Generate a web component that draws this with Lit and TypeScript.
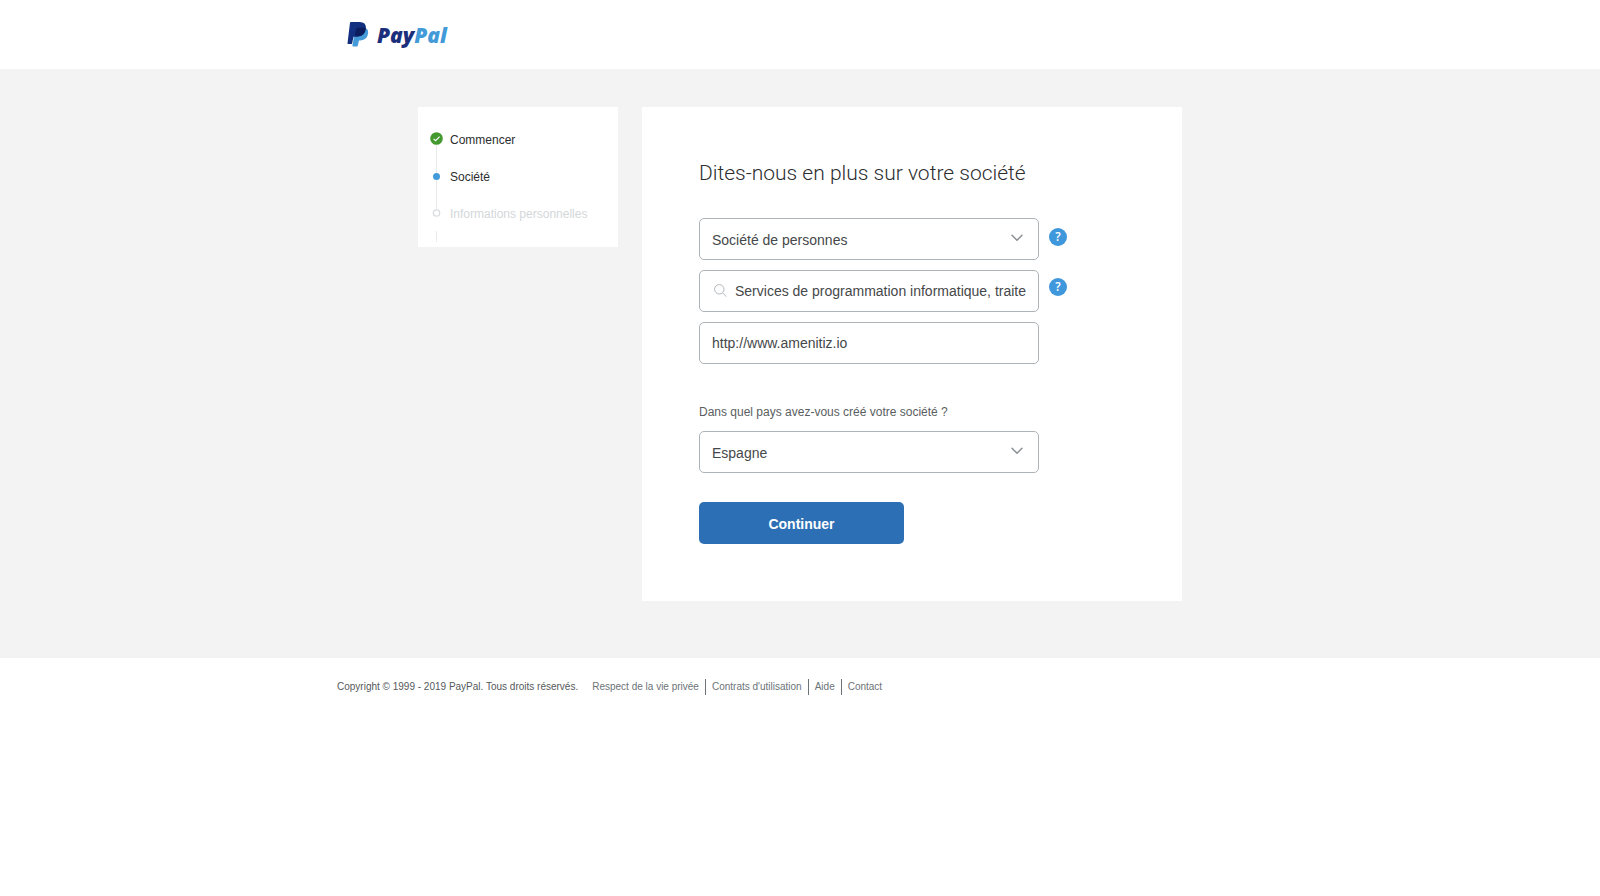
import { LitElement, html, css, svg } from "lit";
import { customElement, property } from "lit/decorators.js";

type StepState = "done" | "current" | "todo";

const chevron = svg`<path d="M1 1.2 L6 6.2 L11 1.2" fill="none" stroke="#8a9094" stroke-width="1.5" stroke-linecap="round" stroke-linejoin="round"/>`;

@customElement("pp-logo")
class PpLogo extends LitElement {
  static styles = css`
    :host { display: block; }
    .logo { display: flex; align-items: center; gap: 8px; text-decoration: none; }
    .mark { display: block; width: 22px; height: 26px; }
    .word { padding-top: 2px; font: italic 800 21px/24px "Open Sans", sans-serif; color: #1b2f7c; }
    .light { color: #429bd8; }
  `;
  render() {
    return html`<a class="logo" href="#" aria-label="PayPal">
      <svg class="mark" viewBox="0 0 22 26" aria-hidden="true">
        <path fill="#459bd8" d="M8.6 6.8 H16.6 Q21.2 7 21.2 11.6 Q20.6 19.4 13.4 19.5 H12 L10.8 24.8 Q10.7 25.6 9.9 25.6 H6.2 Q5.2 25.6 5.4 24.6 Z"/>
        <path fill="#12307f" d="M3.8 1 H12.6 Q19.2 1.2 18.9 6.9 Q18.2 15.2 10.6 15.4 H7.4 Q6.6 15.5 6.4 16.3 L5 23.1 H1.1 Q0.3 23.1 0.5 22.3 L3 1.7 Q3.1 1 3.8 1 Z"/>
        <path fill="#0b1d5c" d="M9.4 6.8 H18.9 Q18.2 15.2 10.6 15.4 H7.7 Z"/>
      </svg>
      <span class="word">Pay<span class="light">Pal</span></span>
    </a>`;
  }
}

@customElement("pp-step")
class PpStep extends LitElement {
  @property() label = "";
  @property() state: StepState = "todo";
  static styles = css`
    :host { display: block; }
    .step { display: grid; grid-template-columns: 13px 1fr; column-gap: 7px; height: 37px; }
    .rail { display: flex; flex-direction: column; align-items: center; }
    .marker { display: block; width: 13px; height: 13px; }
    .line { width: 1px; flex: 1; background: #e9ebed; }
    .gap { margin: 12px 0 1px; }
    .label { font-size: 12px; line-height: 17px; color: #2c2e2f; }
    .muted { color: #d3d7da; }
  `;
  render() {
    const marks = {
      done: svg`<circle cx="6.5" cy="6.5" r="6.3" fill="#43982e"/><path d="M3.6 6.8 L5.6 8.7 L9.6 4.7" fill="none" stroke="#fff" stroke-width="1.1"/>`,
      current: svg`<path d="M6.5 0 V13" stroke="#e9ebed"/><circle cx="6.5" cy="7.4" r="3.5" fill="#429bd8"/>`,
      todo: svg`<path d="M6.5 0 V3" stroke="#e9ebed"/><circle cx="6.5" cy="7" r="3.2" fill="#fff" stroke="#d9dddf" stroke-width="1.3"/>`,
    };
    const todo = this.state === "todo";
    return html`<div class="step">
      <div class="rail">
        <svg class="marker" viewBox="0 0 13 13" aria-hidden="true">${marks[this.state]}</svg>
        <span class="line ${todo ? "gap" : ""}"></span>
      </div>
      <span class="label ${todo ? "muted" : ""}">${this.label}</span>
    </div>`;
  }
}

@customElement("app-root")
class AppRoot extends LitElement {
  static styles = css`
    :host { display: block; min-height: 100vh; background: #fff; color: #2c2e2f; font-family: "Liberation Sans", Arial, sans-serif; }
    * { box-sizing: border-box; }
    .wrap { max-width: 926px; margin: 0 auto; }
    .header { padding: 21px 10px 22px; display: flex; }
    .band { background: #f3f3f3; padding: 38px 0 57px; }
    .columns { max-width: 764px; margin: 0 auto; display: grid; grid-template-columns: 200px 1fr; column-gap: 24px; align-items: start; }
    .steps { background: #fff; padding: 25px 12px 4px; }
    .card { background: #fff; padding: 52px 57px 57px; }
    .title { margin: 0 0 31px; font: 300 21px/28px Roboto, sans-serif; }
    .group { display: flex; gap: 10px; align-items: flex-start; }
    .fields { flex: 0 1 340px; display: grid; gap: 10px; }
    .help { display: grid; gap: 32px; padding-top: 10px; }
    .ask { width: 18px; height: 18px; padding: 0; border: 0; border-radius: 50%; background: #3f97dc; color: #fff; font: 600 12px/18px "Open Sans", sans-serif; }
    .field { position: relative; display: block; }
    .control { display: block; width: 100%; height: 42px; margin: 0; padding: 0 12px; border: 1px solid #adb3b7; border-radius: 5px; background: #fff; color: #45484a; appearance: none; outline: 0; font: 14px/20px "Liberation Sans", Arial, sans-serif; }
    .select { padding-top: 2px; }
    .search { padding-left: 35px; }
    .chevron { position: absolute; right: 16px; top: 16px; width: 12px; height: 8px; pointer-events: none; }
    .glass { position: absolute; left: 15px; top: 14px; width: 13px; height: 13px; pointer-events: none; }
    .country { max-width: 340px; margin-top: 40px; }
    .question { display: block; margin-bottom: 11px; font-size: 12px; line-height: 16px; color: #5a5e61; }
    .submit { display: block; width: 205px; height: 42px; margin-top: 29px; padding: 2px 0 0; border: 0; border-radius: 5px; background: #2d6fb4; color: #fff; font: bold 14px/20px "Liberation Sans", Arial, sans-serif; }
    .footer { display: flex; flex-wrap: wrap; align-items: center; gap: 14px; padding-top: 21px; font-size: 10px; line-height: 16px; color: #55595c; }
    .links { display: flex; align-items: center; }
    .link { color: #6c7378; text-decoration: none; }
    .link + .link { border-left: 1px solid #6c7378; margin-left: 6px; padding-left: 6px; }
  `;

  render() {
    const links = ["Respect de la vie privée", "Contrats d'utilisation", "Aide", "Contact"];
    const arrow = html`<svg class="chevron" viewBox="0 0 12 8" aria-hidden="true">${chevron}</svg>`;
    return html`
      <header class="wrap header"><pp-logo></pp-logo></header>
      <main class="band">
        <div class="columns">
          <nav class="steps" aria-label="Étapes">
            <pp-step state="done" label="Commencer"></pp-step>
            <pp-step state="current" label="Société"></pp-step>
            <pp-step state="todo" label="Informations personnelles"></pp-step>
          </nav>
          <form class="card" @submit=${(e: Event) => e.preventDefault()}>
            <h1 class="title">Dites-nous en plus sur votre société</h1>
            <div class="group">
              <div class="fields">
                <label class="field">
                  <select class="control select" aria-label="Type de société"><option>Société de personnes</option></select>
                  ${arrow}
                </label>
                <label class="field">
                  <input class="control search" type="text" aria-label="Activité" value="Services de programmation informatique, traitement de données" />
                  <svg class="glass" viewBox="0 0 13 13" fill="none" stroke="#b3b8bb" aria-hidden="true">
                    <circle cx="5.3" cy="5.3" r="4.7"/><path d="M8.6 8.8 L12.3 12.6"/>
                  </svg>
                </label>
                <label class="field">
                  <input class="control" type="text" aria-label="Site Web" value="http://www.amenitiz.io" />
                </label>
              </div>
              <div class="help">
                <button class="ask" type="button">?</button>
                <button class="ask" type="button">?</button>
              </div>
            </div>
            <div class="country">
              <label class="question" for="country">Dans quel pays avez-vous créé votre société ?</label>
              <div class="field">
                <select class="control select" id="country"><option>Espagne</option></select>
                ${arrow}
              </div>
            </div>
            <button class="submit" type="submit">Continuer</button>
          </form>
        </div>
      </main>
      <footer class="wrap footer">
        <span>Copyright © 1999 - 2019 PayPal. Tous droits réservés.</span>
        <nav class="links">${links.map((l) => html`<a class="link" href="#">${l}</a>`)}</nav>
      </footer>
    `;
  }
}
